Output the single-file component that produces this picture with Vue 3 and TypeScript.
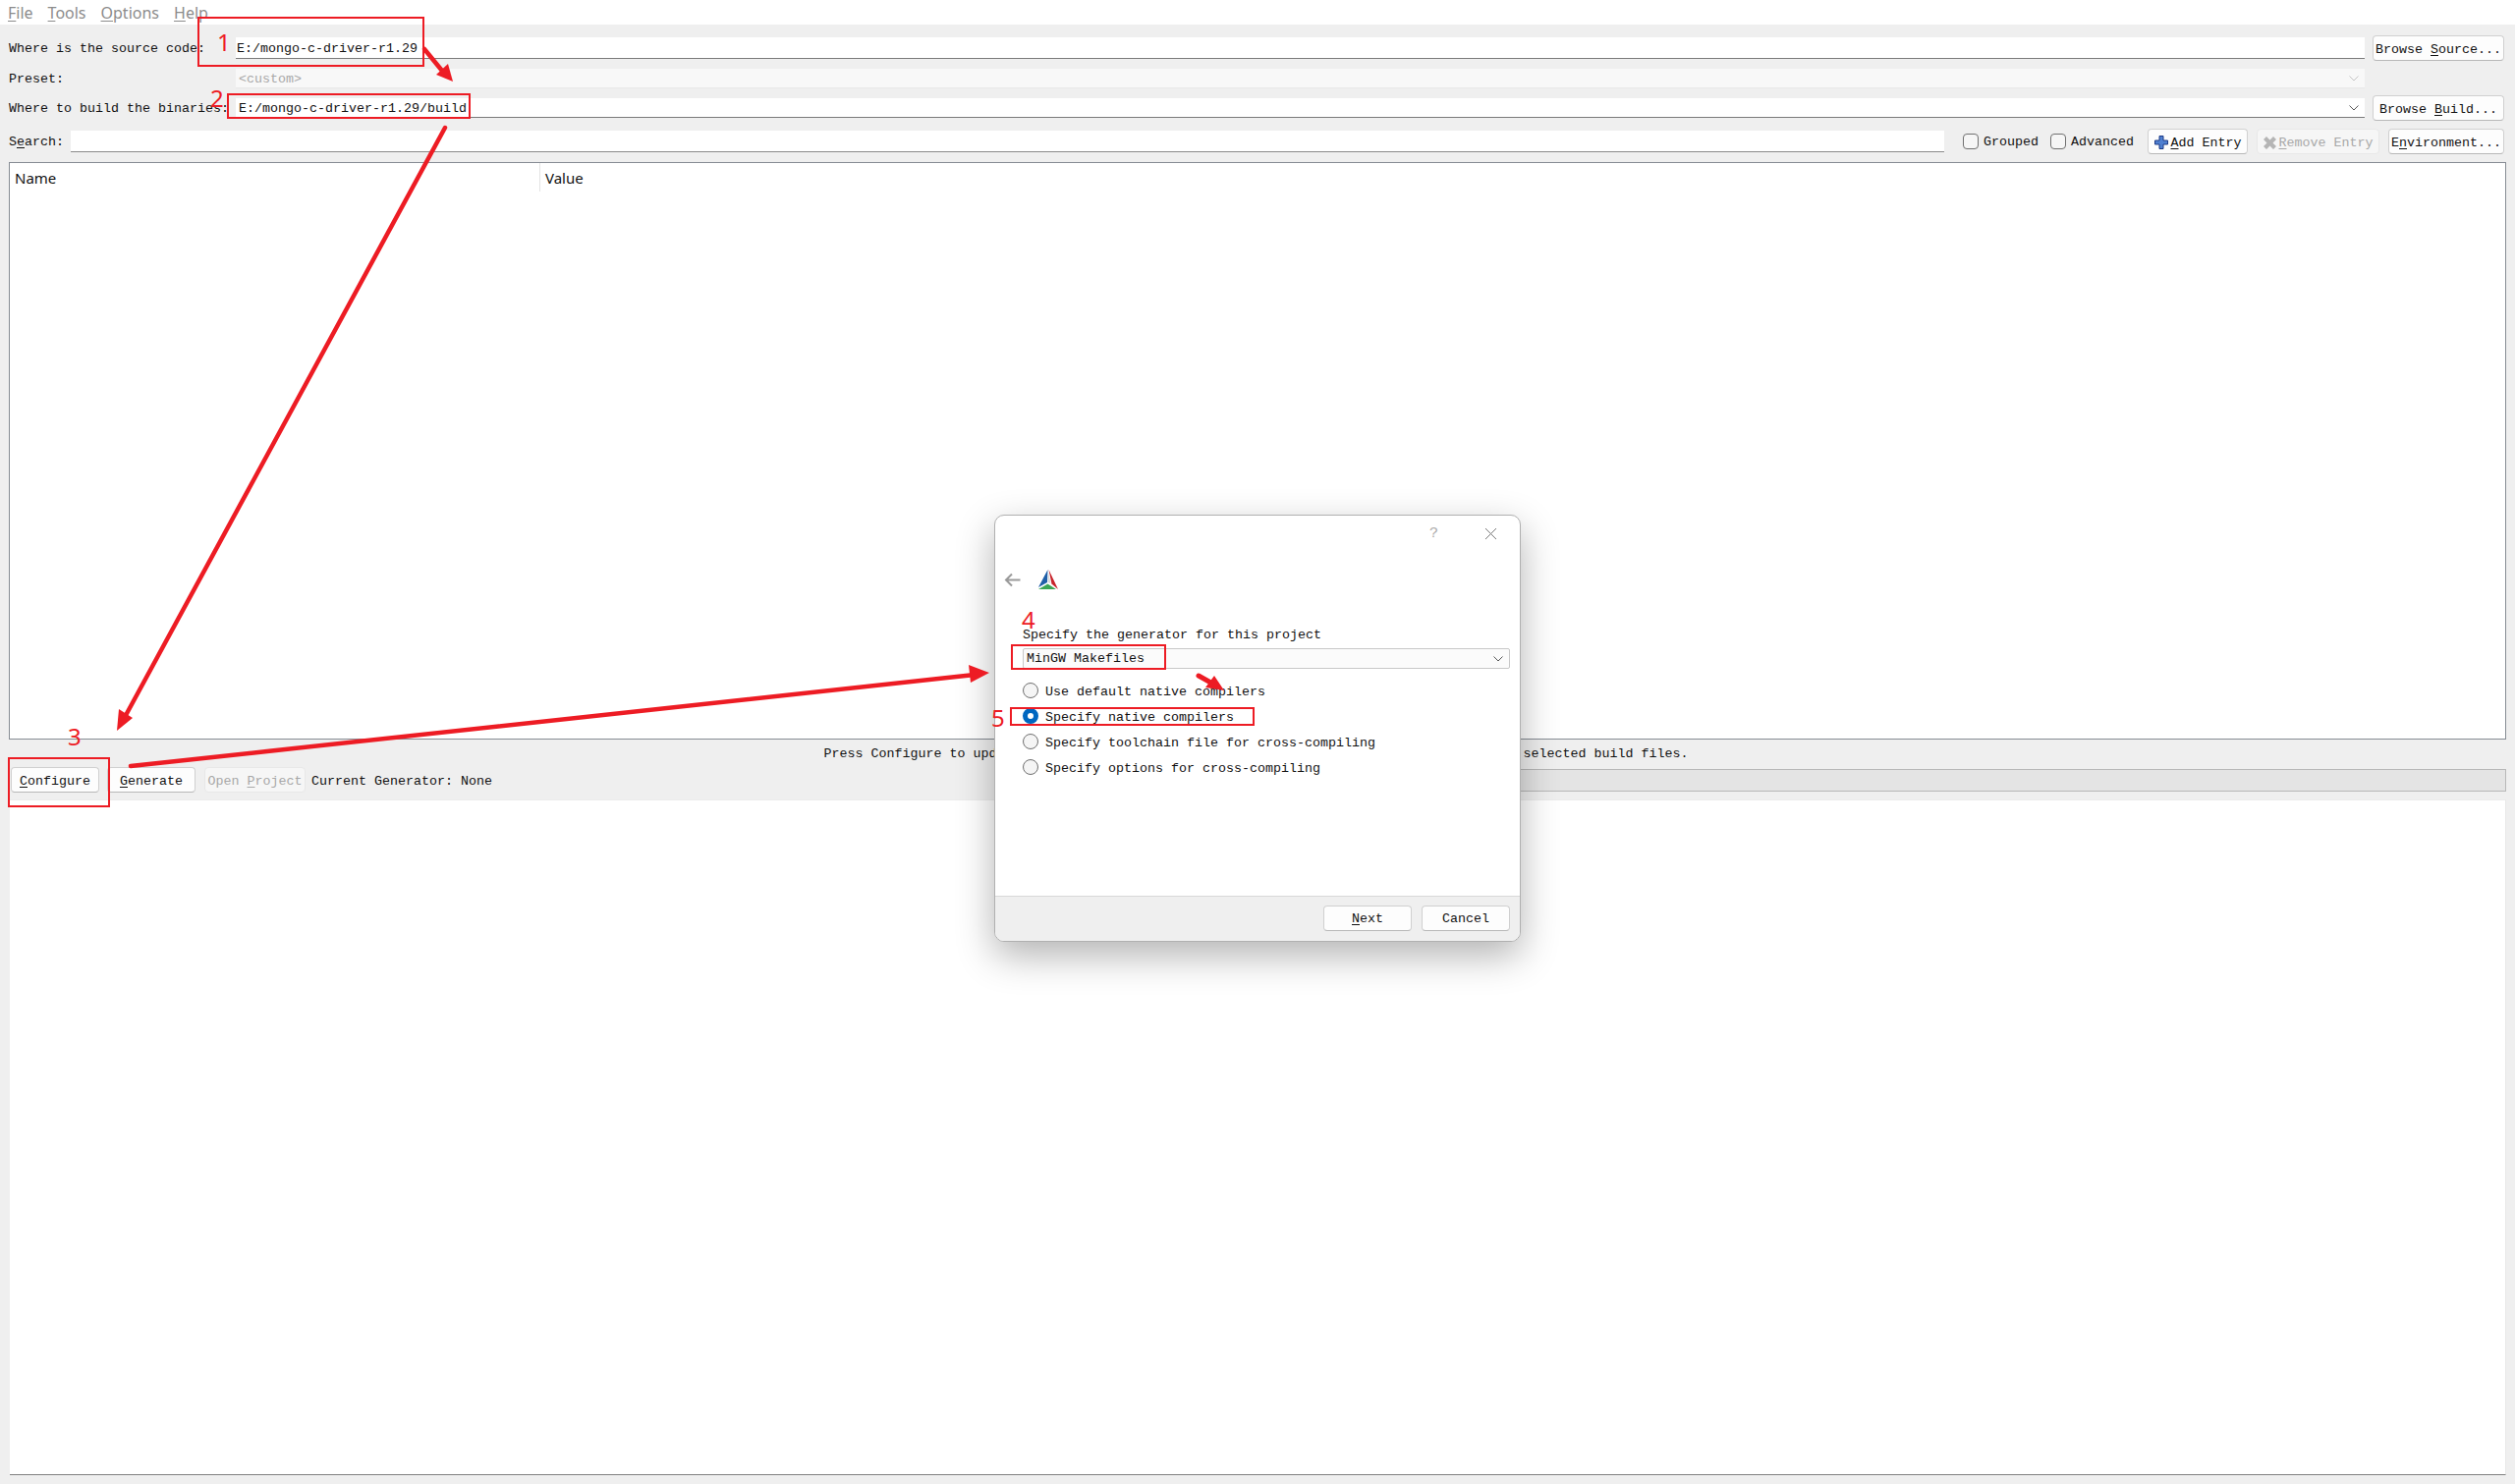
<script setup lang="ts">
const radios = [
  { label: 'Use default native compilers', checked: false },
  { label: 'Specify native compilers', checked: true },
  { label: 'Specify toolchain file for cross-compiling', checked: false },
  { label: 'Specify options for cross-compiling', checked: false },
]

// annotation boxes drawn over the screenshot
const marks = [
  { x: 201, y: 17, w: 231, h: 51 },
  { x: 231, y: 95, w: 248, h: 26 },
  { x: 8, y: 771, w: 104, h: 51 },
  { x: 1029, y: 656, w: 158, h: 26 },
  { x: 1028, y: 720, w: 249, h: 19 },
]

const notes = [
  { n: '1', x: 221, y: 29 },
  { n: '2', x: 214, y: 86 },
  { n: '3', x: 69, y: 736 },
  { n: '4', x: 1040, y: 617 },
  { n: '5', x: 1009, y: 717 },
]
</script>

<template>
  <div class="page">
    <div class="menubar">
      <span><u>F</u>ile</span>
      <span><u>T</u>ools</span>
      <span><u>O</u>ptions</span>
      <span><u>H</u>elp</span>
    </div>

    <div class="top">
      <div class="row row-source">
        <label class="lbl">Where is the source code:</label>
        <div class="input">E:/mongo-c-driver-r1.29</div>
        <button class="btn btn-browse"><span>Browse <u>S</u>ource...</span></button>
      </div>
      <div class="row row-preset">
        <label class="lbl">Preset:</label>
        <div class="input combo disabled">
          <span>&lt;custom&gt;</span>
          <svg width="10" height="6" viewBox="0 0 10 6"><path d="M.5.5 5 5 9.500.5" fill="none" stroke="#c4c4c4" /></svg>
        </div>
        <div class="btn-spacer"></div>
      </div>
      <div class="row row-build">
        <label class="lbl">Where to build the binaries:</label>
        <div class="input combo">
          <span>E:/mongo-c-driver-r1.29/build</span>
          <svg width="10" height="6" viewBox="0 0 10 6"><path d="M.5.5 5 5 9.500.5" fill="none" stroke="#555" /></svg>
        </div>
        <button class="btn btn-browse"><span>Browse <u>B</u>uild...</span></button>
      </div>
      <div class="row row-search">
        <label class="lbl lbl-search">S<u>e</u>arch:</label>
        <div class="input search"></div>
        <label class="check check-grouped"><i></i>Grouped</label>
        <label class="check check-advanced"><i></i>Advanced</label>
        <button class="btn btn-add">
          <svg width="14" height="14" viewBox="0 0 14 14"><path d="M5 .5h4v4.500h4.500v4H9v4.500H5V9H.5V5H5z" fill="#4f7fd0" stroke="#1d3a86" /></svg>
          <span><u>A</u>dd Entry</span>
        </button>
        <button class="btn btn-remove" disabled>
          <svg width="13" height="13" viewBox="0 0 13 13"><path d="M3 0l3.500 3.500L10 0l3 3-3.500 3.500L13 10l-3 3-3.500-3.500L3 13l-3-3 3.500-3.500L0 3z" fill="#b5b5b5" /></svg>
          <span><u>R</u>emove Entry</span>
        </button>
        <button class="btn btn-env"><span>E<u>n</u>vironment...</span></button>
      </div>
    </div>

    <div class="table">
      <div class="thead">
        <div class="th th-name">Name</div>
        <div class="th">Value</div>
      </div>
    </div>

    <div class="status">Press Configure to update and display new values in red, then press Generate to generate selected build files.</div>

    <div class="actions">
      <button class="btn btn-action"><span><u>C</u>onfigure</span></button>
      <button class="btn btn-action"><span><u>G</u>enerate</span></button>
      <button class="btn btn-open" disabled><span>Open <u>P</u>roject</span></button>
      <span class="generator">Current Generator: None</span>
      <div class="progress"></div>
    </div>

    <div class="output"></div>

    <div class="dialog">
      <div class="dlg-title">
        <span class="help">?</span>
        <svg width="13" height="13" viewBox="0 0 13 13"><path d="M1 1l11 11M12 1 1 12" stroke="#777" fill="none" /></svg>
      </div>
      <div class="dlg-nav">
        <svg width="17" height="15" viewBox="0 0 17 15"><path d="M16.500 7.500H2M8 1.500 2 7.500l6 6" stroke="#9a9a9a" stroke-width="2" fill="none" /></svg>
        <svg width="20" height="20" viewBox="0 0 20 20">
          <path d="M9.500 0 0 18 9 13z" fill="#1f5fa8" />
          <path d="M10 3 12.500 14 9.700 13z" fill="#d8d8d8" />
          <path d="M10.500 0 20 20 13.500 14.500z" fill="#c8242b" />
          <path d="M0 20 9.500 14.500 18 20z" fill="#3aa655" />
        </svg>
      </div>
      <div class="dlg-body">
        <div class="dlg-heading">Specify the generator for this project</div>
        <div class="dlg-combo">
          <span>MinGW Makefiles</span>
          <svg width="10" height="6" viewBox="0 0 10 6"><path d="M.5.5 5 5 9.500.5" fill="none" stroke="#555" /></svg>
        </div>
        <div class="radios">
          <div v-for="r in radios" :key="r.label" class="radio-row">
            <i class="radio" :class="{ on: r.checked }"></i>
            <span class="radio-text">{{ r.label }}</span>
          </div>
        </div>
      </div>
      <div class="dlg-footer">
        <button class="btn btn-dlg"><span><u>N</u>ext</span></button>
        <button class="btn btn-dlg">Cancel</button>
      </div>
    </div>

    <div
      v-for="(m, i) in marks"
      :key="i"
      class="mark"
      :style="{ left: m.x + 'px', top: m.y + 'px', width: m.w + 'px', height: m.h + 'px' }"
    ></div>
    <span
      v-for="t in notes"
      :key="t.n"
      class="note"
      :style="{ left: t.x + 'px', top: t.y + 'px' }"
    >{{ t.n }}</span>

    <svg class="arrows" width="2560" height="1511" viewBox="0 0 2560 1511">
      <g stroke="#ed1c24" stroke-width="4.500" stroke-linecap="round">
        <path d="M432 50 450 72" />
        <path d="M453 130 126 732" />
        <path d="M133 780 992 687" />
        <path d="M1220 688 1236 697" stroke-width="5" />
      </g>
      <g fill="#ed1c24">
        <path d="M461 83 444 76 456 65z" />
        <path d="M119 744 121 722 135 731z" />
        <path d="M1007 685 986 677 988 695z" />
        <path d="M1246 703 1227 700 1236 688z" />
      </g>
    </svg>
  </div>
</template>

<style>
html,
body {
  margin: 0;
  background: #fff;
}
</style>

<style scoped>
.page {
  position: relative;
  width: 2560px;
  height: 1511px;
  overflow: hidden;
  background: #efefef;
  font-family: "Liberation Mono", "Noto Sans CJK SC", monospace;
  font-size: 13.33px;
  color: #111;
  display: flex;
  flex-direction: column;
}

u {
  text-underline-offset: 2px;
}

.menubar {
  height: 25px;
  flex: none;
  background: #fff;
  display: flex;
  align-items: center;
  gap: 15px;
  padding: 0 8px;
  box-sizing: border-box;
  color: #8c8c8c;
  font-family: "Noto Sans", sans-serif;
  font-size: 16px;
}

.top {
  display: flex;
  flex-direction: column;
  padding: 11px 11px 0 9px;
}

.row {
  display: flex;
  align-items: center;
}

.row-source,
.row-build,
.row-search {
  height: 26px;
}

.row-preset {
  height: 20px;
  margin-top: 8px;
}

.row-build {
  margin-top: 7px;
}

.row-search {
  margin-top: 8px;
}

.lbl {
  width: 231px;
  flex: none;
  white-space: nowrap;
}

.lbl-search {
  width: 63px;
}

.input {
  flex: 1;
  min-width: 0;
  height: 22px;
  box-sizing: border-box;
  background: #fff;
  border-bottom: 1px solid #7a7a7a;
  padding: 1px 0 0 1px;
  display: flex;
  align-items: center;
  white-space: nowrap;
}

.combo {
  justify-content: space-between;
  padding: 1px 6px 0 3px;
  height: 20px;
}

.disabled {
  background: #f8f8f8;
  color: #a8a8a8;
  border-bottom: 1px solid #e8e8e8;
}

.search {
  flex: 0 0 1907px;
  border-bottom-color: #8a8a8a;
}

.btn {
  font: inherit;
  color: #111;
  background: #fdfdfd;
  border: 1px solid #d0d0d0;
  border-bottom-color: #b8b8b8;
  border-radius: 4px;
  padding: 2px 0 0;
  height: 26px;
  display: flex;
  align-items: center;
  justify-content: center;
  box-sizing: border-box;
  white-space: nowrap;
  flex: none;
}

.btn:disabled {
  background: #f6f6f6;
  border-color: #e8e8e8;
  color: #a8a8a8;
}

.btn-browse {
  width: 134px;
  margin-left: 8px;
}

.btn-spacer {
  flex: none;
  width: 142px;
}

.check {
  display: flex;
  align-items: center;
  gap: 5px;
  white-space: nowrap;
}

.check i {
  display: block;
  width: 16px;
  height: 16px;
  box-sizing: border-box;
  border: 1px solid #707070;
  border-radius: 4px;
  background: #f6f6f6;
}

.check-grouped {
  margin-left: 19px;
}

.check-advanced {
  margin-left: 12px;
}

.btn-add {
  width: 102px;
  margin-left: 14px;
  gap: 3px;
}

.btn-remove {
  width: 125px;
  margin-left: 9px;
  gap: 3px;
}

.btn-env {
  width: 118px;
  margin-left: 9px;
}

.table {
  margin: 8px 9px 0 9px;
  height: 588px;
  flex: none;
  box-sizing: border-box;
  background: #fff;
  border: 1px solid #868c94;
}

.thead {
  display: flex;
  height: 29px;
  font-family: "Noto Sans", sans-serif;
  font-size: 15px;
  color: #111;
}

.th {
  display: flex;
  align-items: center;
  padding-left: 5px;
}

.th-name {
  width: 540px;
  flex: none;
  box-sizing: border-box;
  border-right: 1px solid #e4e4e4;
}

.status {
  height: 28px;
  flex: none;
  display: flex;
  align-items: center;
  justify-content: center;
  padding-right: 3px;
  white-space: nowrap;
}

.actions {
  height: 26px;
  flex: none;
  display: flex;
  align-items: center;
  padding: 0 9px 0 11px;
}

.btn-action {
  width: 90px;
  margin-right: 8px;
}

.btn-open {
  width: 103px;
  margin-left: 1px;
}

.generator {
  margin-left: 6px;
  padding-top: 2px;
  white-space: nowrap;
  flex: none;
}

.progress {
  flex: 0 0 1351px;
  height: 23px;
  box-sizing: border-box;
  margin-left: auto;
  background: #e4e4e4;
  border: 1px solid #b8b8b8;
}

.output {
  margin: 7px 9px 9px 10px;
  flex: 1;
  background: #fff;
  border-top: 1px solid #ececec;
  border-right: 1px solid #e8e8e8;
  border-bottom: 1px solid #808080;
}

.dialog {
  position: absolute;
  left: 1012px;
  top: 524px;
  width: 536px;
  height: 435px;
  box-sizing: border-box;
  background: #fff;
  border: 1px solid #b0b0b0;
  border-radius: 10px;
  box-shadow: 0 14px 38px rgba(0, 0, 0, 0.3);
  display: flex;
  flex-direction: column;
  overflow: hidden;
}

.dlg-title {
  height: 36px;
  flex: none;
  display: flex;
  align-items: center;
  justify-content: flex-end;
  padding-right: 23px;
  gap: 47px;
  color: #aaa;
}

.help {
  font-size: 15px;
}

.dlg-nav {
  height: 40px;
  flex: none;
  display: flex;
  align-items: center;
  padding-left: 9px;
  gap: 18px;
  margin-top: 9px;
}

.dlg-body {
  flex: 1;
  padding: 28px 10px 0 28px;
}

.dlg-heading {
  height: 18px;
  line-height: 18px;
}

.dlg-combo {
  height: 21px;
  margin-top: 4px;
  box-sizing: border-box;
  background: #fbfbfb;
  border: 1px solid #c8c8c8;
  border-radius: 2px;
  display: flex;
  align-items: center;
  justify-content: space-between;
  padding: 0 6px 0 3px;
}

.radios {
  display: flex;
  flex-direction: column;
  margin-top: 13px;
  gap: 8px;
}

.radio-row {
  height: 18px;
  display: flex;
  align-items: center;
  gap: 7px;
  white-space: nowrap;
}

.radio-text {
  padding-top: 2px;
}

.radio {
  width: 16px;
  height: 16px;
  box-sizing: border-box;
  border: 1px solid #6f6f6f;
  border-radius: 50%;
  background: #f5f5f5;
  flex: none;
}

.radio.on {
  border: 5px solid #0067c0;
  background: #fff;
}

.dlg-footer {
  height: 46px;
  flex: none;
  box-sizing: border-box;
  background: #efefef;
  border-top: 1px solid #d8d8d8;
  display: flex;
  justify-content: flex-end;
  align-items: center;
  gap: 10px;
  padding: 0 10px 2px 0;
}

.btn-dlg {
  width: 90px;
}

.mark {
  position: absolute;
  box-sizing: border-box;
  border: 2px solid #ed1c24;
}

.note {
  position: absolute;
  color: #ed1c24;
  font-family: "Noto Sans", sans-serif;
  font-size: 24px;
  line-height: 28px;
}

.arrows {
  position: absolute;
  left: 0;
  top: 0;
  pointer-events: none;
}
</style>
